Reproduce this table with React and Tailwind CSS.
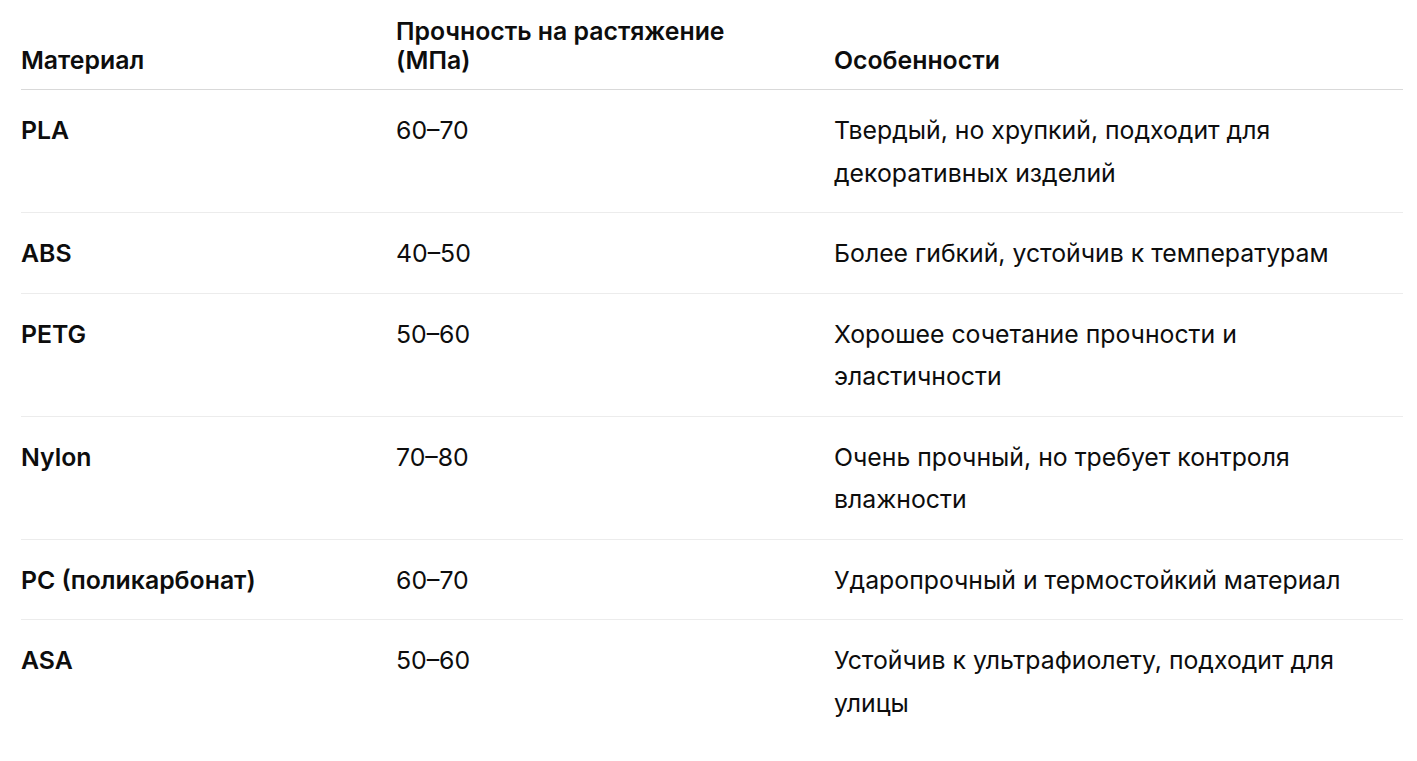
import React from "react";

const rows = [
  ["PLA", "60–70", "Твердый, но хрупкий, подходит для декоративных изделий"],
  ["ABS", "40–50", "Более гибкий, устойчив к температурам"],
  ["PETG", "50–60", "Хорошее сочетание прочности и эластичности"],
  ["Nylon", "70–80", "Очень прочный, но требует контроля влажности"],
  ["PC (поликарбонат)", "60–70", "Ударопрочный и термостойкий материал"],
  ["ASA", "50–60", "Устойчив к ультрафиолету, подходит для улицы"],
];

export default function App() {
  return (
    <div
      className="min-h-screen bg-white text-[#0d0d0d] pl-[21px] pr-[14px]"
      style={{ fontFamily: "Inter, 'Noto Sans', sans-serif" }}
    >
      <table className="w-full border-collapse text-[24.8px] table-fixed">
        <colgroup>
          <col className="w-[375px]" />
          <col className="w-[438px]" />
          <col />
        </colgroup>
        <thead>
          <tr className="border-b border-[#d9d9d9]">
            <th className="text-left align-bottom font-semibold leading-[29px] pt-[17px] pb-[14px] pr-4">
              Материал
            </th>
            <th className="text-left align-bottom font-semibold leading-[29px] pt-[17px] pb-[14px] pr-4">
              Прочность на растяжение
              <br />
              (МПа)
            </th>
            <th className="text-left align-bottom font-semibold leading-[29px] pt-[17px] pb-[14px] pr-4">
              Особенности
            </th>
          </tr>
        </thead>
        <tbody>
          {rows.map((r, i) => (
            <tr
              key={i}
              className={i < rows.length - 1 ? "border-b border-[#ececec]" : ""}
            >
              <td className="align-top font-semibold leading-[42.5px] pt-[19px] pb-[18px] pr-4">
                {r[0]}
              </td>
              <td className="align-top leading-[42.5px] pt-[19px] pb-[18px] pr-4">
                {r[1]}
              </td>
              <td className="align-top leading-[42.5px] pt-[19px] pb-[18px] pr-[40px]">
                {r[2]}
              </td>
            </tr>
          ))}
        </tbody>
      </table>
    </div>
  );
}
